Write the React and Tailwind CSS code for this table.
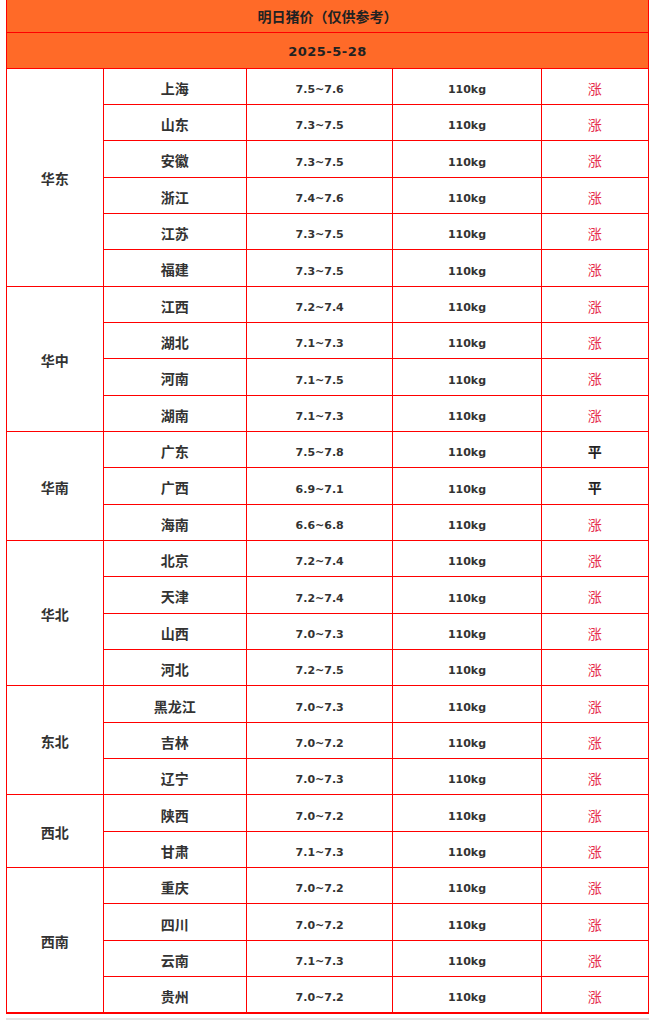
const regions = [
  {
    name: '华东',
    rows: [
      ['上海', '7.5~7.6', '涨'],
      ['山东', '7.3~7.5', '涨'],
      ['安徽', '7.3~7.5', '涨'],
      ['浙江', '7.4~7.6', '涨'],
      ['江苏', '7.3~7.5', '涨'],
      ['福建', '7.3~7.5', '涨'],
    ],
  },
  {
    name: '华中',
    rows: [
      ['江西', '7.2~7.4', '涨'],
      ['湖北', '7.1~7.3', '涨'],
      ['河南', '7.1~7.5', '涨'],
      ['湖南', '7.1~7.3', '涨'],
    ],
  },
  {
    name: '华南',
    rows: [
      ['广东', '7.5~7.8', '平'],
      ['广西', '6.9~7.1', '平'],
      ['海南', '6.6~6.8', '涨'],
    ],
  },
  {
    name: '华北',
    rows: [
      ['北京', '7.2~7.4', '涨'],
      ['天津', '7.2~7.4', '涨'],
      ['山西', '7.0~7.3', '涨'],
      ['河北', '7.2~7.5', '涨'],
    ],
  },
  {
    name: '东北',
    rows: [
      ['黑龙江', '7.0~7.3', '涨'],
      ['吉林', '7.0~7.2', '涨'],
      ['辽宁', '7.0~7.3', '涨'],
    ],
  },
  {
    name: '西北',
    rows: [
      ['陕西', '7.0~7.2', '涨'],
      ['甘肃', '7.1~7.3', '涨'],
    ],
  },
  {
    name: '西南',
    rows: [
      ['重庆', '7.0~7.2', '涨'],
      ['四川', '7.0~7.2', '涨'],
      ['云南', '7.1~7.3', '涨'],
      ['贵州', '7.0~7.2', '涨'],
    ],
  },
];

const cjk = "font-['Noto_Sans_CJK_SC',sans-serif]";
const num = "font-['DejaVu_Sans','Noto_Sans_CJK_SC',sans-serif]";

function App() {
  return (
    <div className="bg-white w-[652px] h-[1024px] overflow-hidden pl-[6px] pr-[3px]">
      <table className="w-full border-collapse table-fixed text-[#333] border-b-2 border-[#ff0000]">
        <colgroup>
          <col className="w-[96.5px]" />
          <col className="w-[143.5px]" />
          <col className="w-[146.3px]" />
          <col className="w-[148.4px]" />
          <col />
        </colgroup>
        <tbody>
          <tr className="h-[32px] bg-[#ff6a28]">
            <td
              colSpan={5}
              className={`border border-t-0 border-[#ff0000] text-center text-[14px] font-bold text-[#222] pt-[2px] ${cjk}`}
            >
              明日猪价（仅供参考）
            </td>
          </tr>
          <tr className="h-[36px] bg-[#ff6a28]">
            <td
              colSpan={5}
              className={`border border-[#ff0000] text-center text-[13px] font-bold text-[#222] tracking-[0.5px] pt-[4px] ${num}`}
            >
              2025-5-28
            </td>
          </tr>
          {regions.map((region) =>
            region.rows.map((row, i) => (
              <tr key={region.name + row[0]} className="h-[36.35px]">
                {i === 0 && (
                  <td
                    rowSpan={region.rows.length}
                    className={`border border-[#ff0000] text-center text-[14px] font-bold pt-[3px] ${cjk}`}
                  >
                    {region.name}
                  </td>
                )}
                <td className={`border border-[#ff0000] text-center text-[14px] font-bold pt-[4px] ${cjk}`}>
                  {row[0]}
                </td>
                <td className={`border border-[#ff0000] text-center text-[11px] font-bold pt-[8px] ${num}`}>
                  {row[1]}
                </td>
                <td className={`border border-[#ff0000] text-center text-[11px] font-bold pt-[8px] ${num}`}>
                  110kg
                </td>
                <td
                  className={`border border-[#ff0000] text-center text-[14px] pt-[4px] ${cjk} ${
                    row[2] === '涨' ? 'text-[#e62e4d]' : 'font-bold text-[#222]'
                  }`}
                >
                  {row[2]}
                </td>
              </tr>
            ))
          )}
        </tbody>
      </table>
      <div className="mt-[4px] h-[2px] bg-[#e3e3e3]" />
    </div>
  );
}

export default App;
